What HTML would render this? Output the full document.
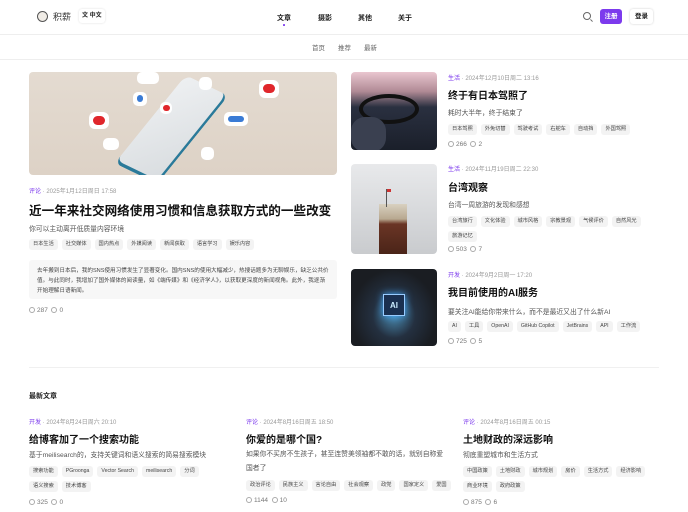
<!DOCTYPE html>
<html><head><meta charset="utf-8">
<style>
*{margin:0;padding:0;box-sizing:border-box}
body{width:688px;height:512px;overflow:hidden;background:#fff;font-family:"Liberation Sans","Noto Sans CJK SC",sans-serif;color:#222;position:relative}
.a{position:absolute;white-space:nowrap}
.nav{font-size:7px;font-weight:bold;color:#222}
.sub{font-size:6.5px;color:#666}
.meta{font-size:6px;color:#999}
.meta b{color:#7c3aed;font-weight:normal}
.t1{font-size:12.6px;font-weight:bold;color:#111}
.t2{font-size:10px;font-weight:bold;color:#111}
.t3{font-size:10px;font-weight:bold;color:#111}
.d{font-size:6.8px;color:#555}
.tags{display:flex;flex-wrap:wrap;gap:4px 4px}
.tags span{font-size:5.2px;color:#444;background:#f3f3f3;border-radius:3px;padding:0 4px;height:11px;line-height:11px}
.st{font-size:6.5px;color:#777}
.st i{display:inline-block;width:6px;height:6px;border:1px solid #aaa;border-radius:50%;vertical-align:-1px;margin-right:2px}
.img{position:absolute;border-radius:4px;overflow:hidden}
</style></head><body>
<div class="a" style="left:37px;top:11px;width:11px;height:11px;border:1px solid #555;border-radius:50%;background:#f0ece6"></div>
<div class="a" style="left:53px;top:10px;font-size:9px;color:#333">积薪</div>
<div class="a" style="left:79px;top:9px;width:26px;height:14px;border-radius:3px;background:#fff;box-shadow:0 0 2px #ddd;font-size:6px;line-height:14px;padding-left:3px;font-weight:bold">文 中文</div>
<div class="a nav" style="left:277px;top:13px">文章</div>
<div class="a" style="left:283px;top:24px;width:1.5px;height:1.5px;background:#7c3aed;border-radius:50%"></div>
<div class="a nav" style="left:318px;top:13px">摄影</div>
<div class="a nav" style="left:358px;top:13px">其他</div>
<div class="a nav" style="left:398px;top:13px">关于</div>
<div class="a" style="left:583px;top:12px;width:8px;height:8px;border:1px solid #666;border-radius:50%"></div>
<div class="a" style="left:590px;top:20px;width:3px;height:1px;background:#666;transform:rotate(45deg)"></div>
<div class="a" style="left:600px;top:9px;width:22px;height:15px;background:#7c3aed;border-radius:3px;color:#fff;font-size:6.5px;font-weight:bold;text-align:center;line-height:15px">注册</div>
<div class="a" style="left:630px;top:9px;width:23px;height:15px;background:#fff;border-radius:3px;box-shadow:0 0 2px #ccc;font-size:6.5px;font-weight:bold;text-align:center;line-height:15px">登录</div>
<div class="a" style="left:0;top:34px;width:688px;height:1px;background:#eee"></div>
<div class="a sub" style="left:312px;top:42px">首页</div>
<div class="a sub" style="left:338px;top:42px">推荐</div>
<div class="a sub" style="left:364px;top:42px">最新</div>
<div class="a" style="left:0;top:59px;width:688px;height:1px;background:#eee"></div>

<div class="img" style="left:29px;top:72px;width:308px;height:103px;background:linear-gradient(180deg,#e4dbd1,#ddd2c6)">
 <div class="a" style="left:115px;top:10px;width:55px;height:95px;background:linear-gradient(135deg,#eef0f2,#d9dde0);border-right:3px solid #2a7a9a;border-bottom:3px solid #2a7a9a;border-radius:8px;transform:skewX(-22deg) rotate(22deg)"></div>
 <div class="a" style="left:230px;top:8px;width:20px;height:18px;background:#fff;border-radius:6px"></div>
 <div class="a" style="left:234px;top:12px;width:12px;height:9px;background:#e0262b;border-radius:5px"></div>
 <div class="a" style="left:60px;top:40px;width:20px;height:17px;background:#fff;border-radius:6px"></div>
 <div class="a" style="left:64px;top:44px;width:12px;height:9px;background:#e0262b;border-radius:5px"></div>
 <div class="a" style="left:104px;top:20px;width:14px;height:14px;background:#fff;border-radius:5px"></div>
 <div class="a" style="left:108px;top:23px;width:6px;height:7px;background:#3a7bd5;border-radius:3px"></div>
 <div class="a" style="left:108px;top:0;width:22px;height:12px;background:#fff;border-radius:5px"></div>
 <div class="a" style="left:131px;top:30px;width:12px;height:12px;background:#fff;border-radius:5px"></div>
 <div class="a" style="left:134px;top:33px;width:7px;height:6px;background:#e0262b;border-radius:3px"></div>
 <div class="a" style="left:195px;top:40px;width:24px;height:14px;background:#fff;border-radius:5px"></div>
 <div class="a" style="left:199px;top:44px;width:16px;height:6px;background:#3a7bd5;border-radius:3px"></div>
 <div class="a" style="left:170px;top:5px;width:13px;height:13px;background:#fff;border-radius:5px"></div>
 <div class="a" style="left:172px;top:75px;width:13px;height:13px;background:#fff;border-radius:5px"></div>
 <div class="a" style="left:74px;top:66px;width:16px;height:12px;background:#fff;border-radius:5px"></div>
</div>
<div class="a meta" style="left:29px;top:186px"><b>评论</b> · 2025年1月12日周日 17:58</div>
<div class="a t1" style="left:29px;top:200px">近一年来社交网络使用习惯和信息获取方式的一些改变</div>
<div class="a d" style="left:29px;top:223px">你可以主动离开低质量内容环境</div>
<div class="a tags" style="left:29px;top:239px"><span>日本生活</span><span>社交媒体</span><span>国内热点</span><span>外媒阅读</span><span>新闻获取</span><span>语言学习</span><span>娱乐内容</span></div>
<div class="a" style="left:29px;top:260px;width:308px;height:39px;background:#f7f7f7;border-radius:3px;padding:6px 8px;font-size:5.6px;line-height:10px;color:#444;white-space:normal">去年搬到日本后，我的SNS使用习惯发生了显著变化。国内SNS的使用大幅减少，热搜话题多为无聊娱乐，缺乏公共价值。与此同时，我增加了国外媒体的阅读量，如《端传媒》和《经济学人》，以获取更深度的新闻视角。此外，我逐渐开始理解日语新闻。</div>
<div class="a st" style="left:29px;top:307px"><i></i>287 &nbsp;<i></i>0</div>

<div class="img" style="left:351px;top:72px;width:86px;height:78px;background:linear-gradient(180deg,#e9c6cf 0%,#b08a95 25%,#2a3040 45%,#1a1f2a 100%)">
 <div class="a" style="left:8px;top:22px;width:60px;height:30px;border:4px solid #111;border-radius:50%"></div>
 <div class="a" style="left:0;top:45px;width:35px;height:35px;background:#3a4050;border-radius:40%"></div>
</div>
<div class="a meta" style="left:448px;top:73px"><b>生活</b> · 2024年12月10日周二 13:16</div>
<div class="a t2" style="left:448px;top:87px">终于有日本驾照了</div>
<div class="a d" style="left:448px;top:107px">耗时大半年，终于结束了</div>
<div class="a tags" style="left:448px;top:124px"><span>日本驾照</span><span>外免切替</span><span>驾驶考试</span><span>右舵车</span><span>自动挡</span><span>外国驾照</span></div>
<div class="a st" style="left:448px;top:141px"><i></i>266 &nbsp;<i></i>2</div>

<div class="img" style="left:351px;top:164px;width:86px;height:90px;background:linear-gradient(180deg,#e8e9eb,#c9cbce)">
 <div class="a" style="left:28px;top:40px;width:28px;height:50px;background:linear-gradient(180deg,#d8d0c0 0%,#b8a890 30%,#6a3525 40%,#4a2418 100%)"></div>
 <div class="a" style="left:35px;top:25px;width:1px;height:18px;background:#555"></div>
 <div class="a" style="left:36px;top:25px;width:4px;height:3px;background:#c33"></div>
</div>
<div class="a meta" style="left:448px;top:164px"><b>生活</b> · 2024年11月19日周二 22:30</div>
<div class="a t2" style="left:448px;top:179px">台湾观察</div>
<div class="a d" style="left:448px;top:199px">台湾一周旅游的发现和感想</div>
<div class="a tags" style="left:448px;top:216px;width:200px"><span>台湾旅行</span><span>文化体验</span><span>城市风格</span><span>宗教景观</span><span>气候评价</span><span>自然风光</span><span>旅游记忆</span></div>
<div class="a st" style="left:448px;top:246px"><i></i>503 &nbsp;<i></i>7</div>

<div class="img" style="left:351px;top:269px;width:86px;height:77px;background:radial-gradient(ellipse at 50% 60%,#4a8ab0 0%,#243040 35%,#1a1d22 70%)">
 <div class="a" style="left:32px;top:25px;width:22px;height:22px;background:#1a3050;border:1px solid #9cf;box-shadow:0 0 8px #4af;color:#cef;font-size:8px;font-weight:bold;text-align:center;line-height:22px">AI</div>
</div>
<div class="a meta" style="left:448px;top:270px"><b>开发</b> · 2024年9月2日周一 17:20</div>
<div class="a t2" style="left:448px;top:284px">我目前使用的AI服务</div>
<div class="a d" style="left:448px;top:306px">要关注AI能给你带来什么，而不是最近又出了什么新AI</div>
<div class="a tags" style="left:448px;top:321px"><span>AI</span><span>工具</span><span>OpenAI</span><span>GitHub Copilot</span><span>JetBrains</span><span>API</span><span>工作流</span></div>
<div class="a st" style="left:448px;top:338px"><i></i>725 &nbsp;<i></i>5</div>

<div class="a" style="left:29px;top:367px;width:630px;height:1px;background:#f0f0f0"></div>
<div class="a" style="left:29px;top:391px;font-size:7px;font-weight:bold;color:#222">最新文章</div>

<div class="a meta" style="left:29px;top:417px"><b>开发</b> · 2024年8月24日周六 20:10</div>
<div class="a t3" style="left:29px;top:431px">给博客加了一个搜索功能</div>
<div class="a d" style="left:29px;top:449px">基于meilisearch的，支持关键词和语义搜索的简易搜索模块</div>
<div class="a tags" style="left:29px;top:466px;width:170px"><span>搜索功能</span><span>PGroonga</span><span>Vector Search</span><span>meilisearch</span><span>分词</span><span>语义搜索</span><span>技术博客</span></div>
<div class="a st" style="left:29px;top:499px"><i></i>325 &nbsp;<i></i>0</div>

<div class="a meta" style="left:246px;top:417px"><b>评论</b> · 2024年8月16日周五 18:50</div>
<div class="a t3" style="left:246px;top:431px">你爱的是哪个国?</div>
<div class="a d" style="left:246px;top:448px;white-space:normal;width:200px;line-height:14px">如果你不买房不生孩子，甚至连赞美领袖都不敢的话，就别自称爱国者了</div>
<div class="a tags" style="left:246px;top:480px;width:210px"><span>政治评论</span><span>民族主义</span><span>言论自由</span><span>社会观察</span><span>政党</span><span>国家定义</span><span>爱国</span></div>
<div class="a st" style="left:246px;top:497px"><i></i>1144 &nbsp;<i></i>10</div>

<div class="a meta" style="left:463px;top:417px"><b>评论</b> · 2024年8月16日周五 00:15</div>
<div class="a t3" style="left:463px;top:431px">土地财政的深远影响</div>
<div class="a d" style="left:463px;top:449px">彻底重塑城市和生活方式</div>
<div class="a tags" style="left:463px;top:466px;width:200px"><span>中国政策</span><span>土地财政</span><span>城市规划</span><span>房价</span><span>生活方式</span><span>经济影响</span><span>商业环境</span><span>政府政策</span></div>
<div class="a st" style="left:463px;top:499px"><i></i>875 &nbsp;<i></i>6</div>
</body></html>
